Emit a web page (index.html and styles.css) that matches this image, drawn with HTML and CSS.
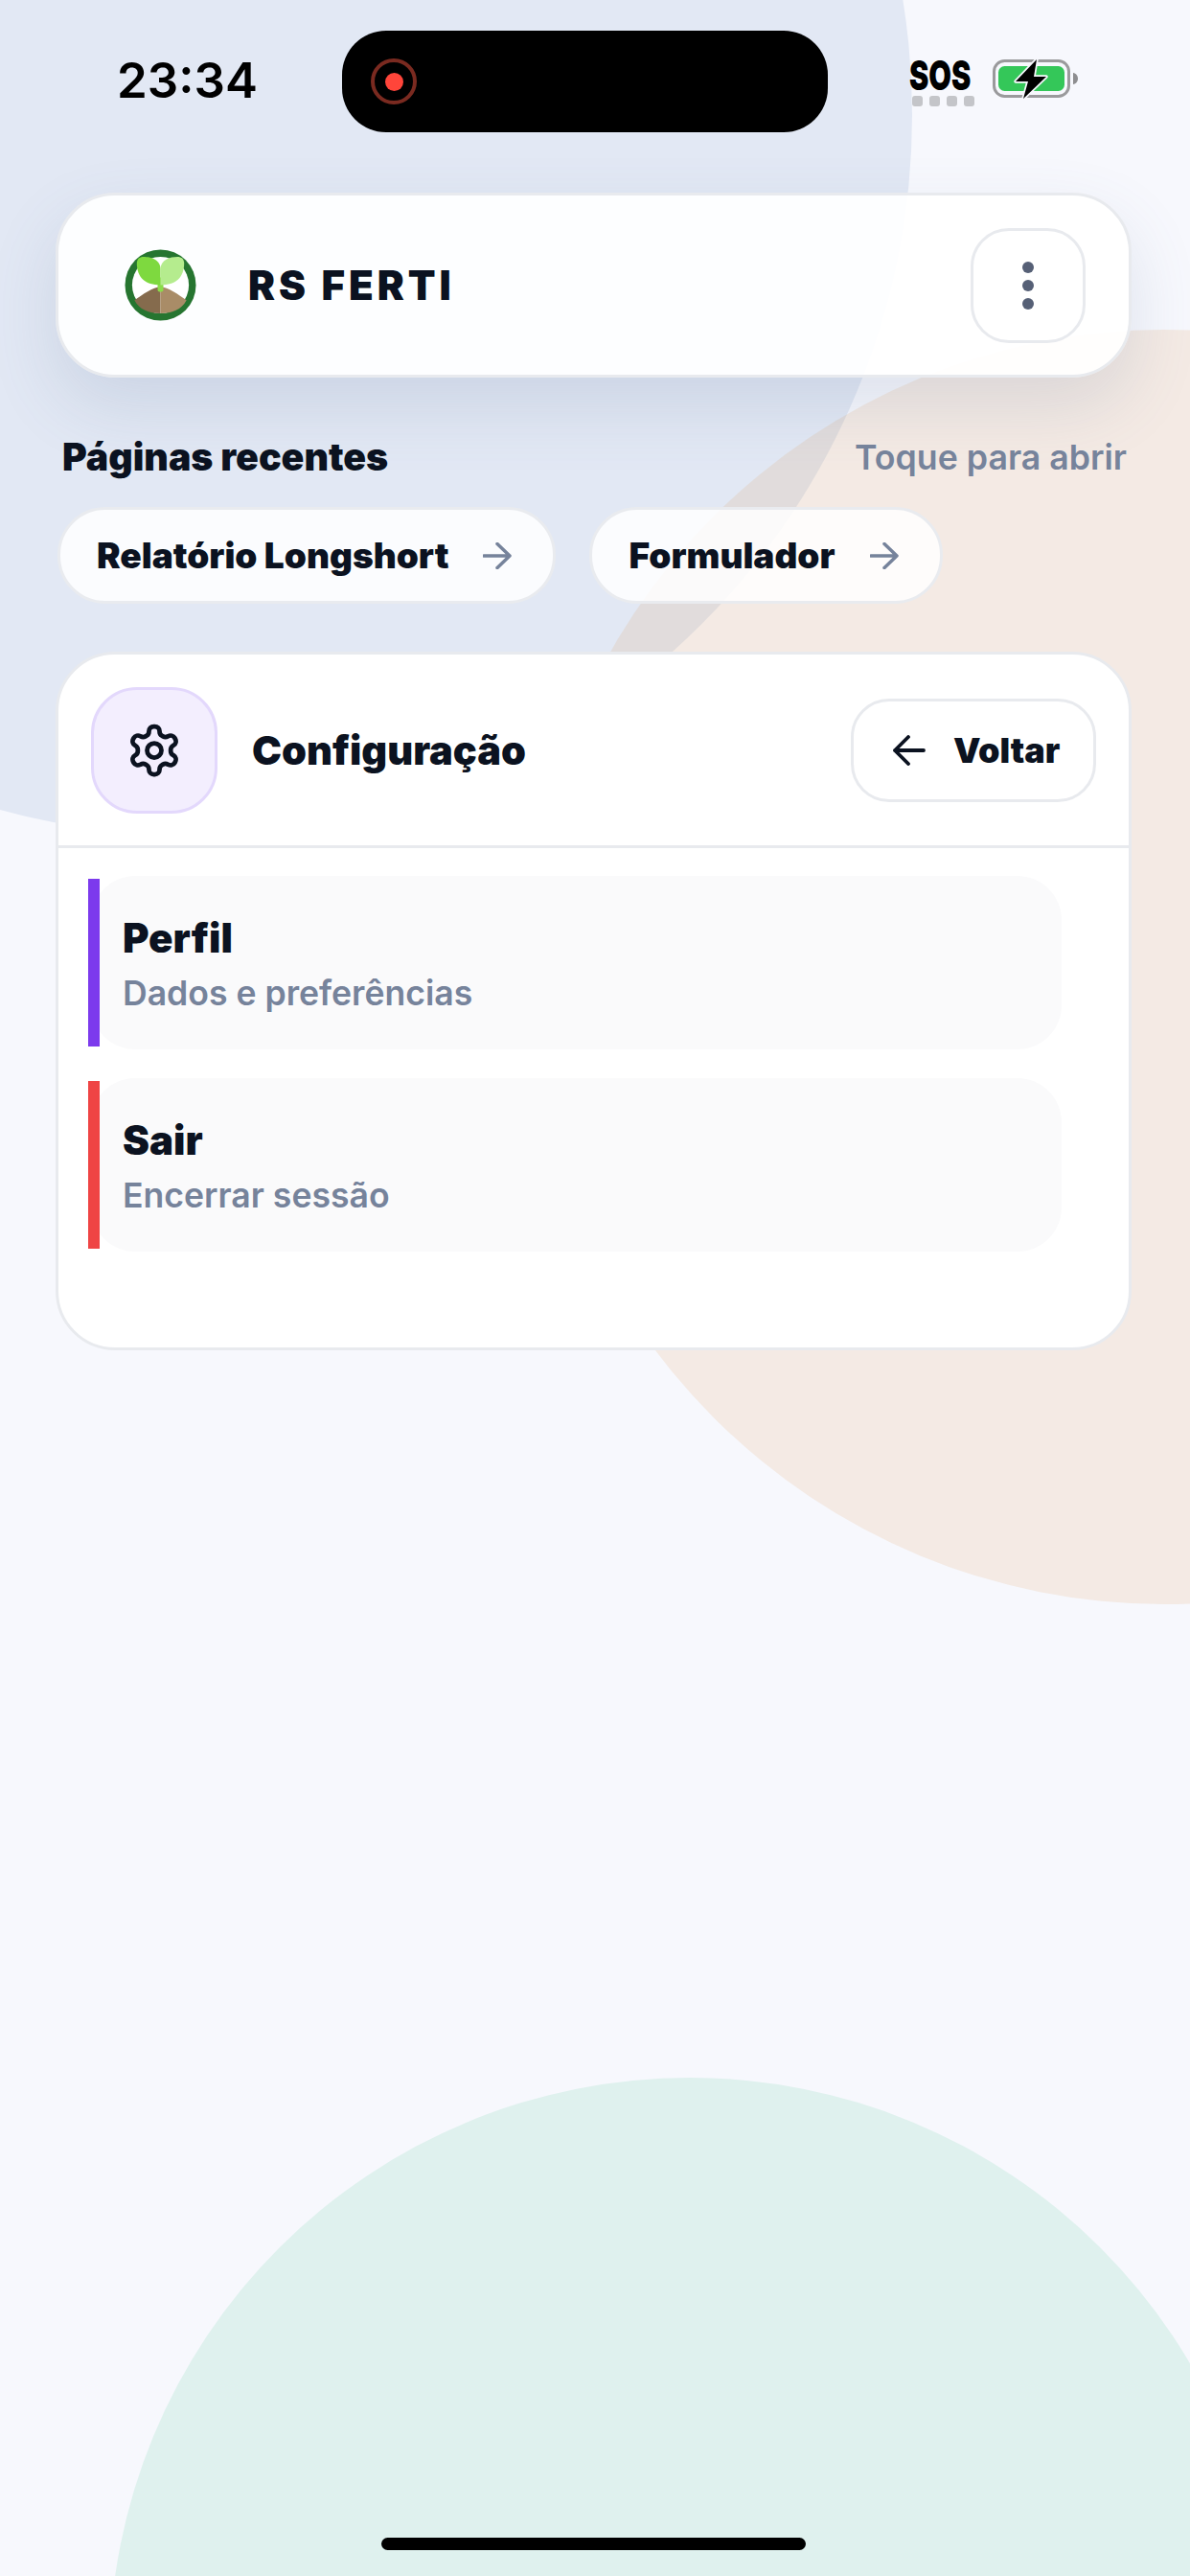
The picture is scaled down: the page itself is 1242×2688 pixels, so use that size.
FILE: index.html
```html
<!DOCTYPE html>
<html lang="pt-BR">
<head>
	<title>RS FERTI</title>
	<meta charset="utf-8">
	<link rel="stylesheet" href="styles.css">
</head>
<body>
	<div class="bg">
		<div class="blob blobBlue"></div>
		<div class="blob blobPeach"></div>
		<div class="blob blobTeal"></div>
	</div>

	<div class="page">
		<div class="statusBar">
			<div class="time">23:34</div>
			<div class="island">
				<div class="recRing"><div class="recDot"></div></div>
			</div>
			<div class="statusRight">
				<div class="sos">
					<div class="sosText">SOS</div>
					<div class="sosDots"><i></i><i></i><i></i><i></i></div>
				</div>
				<svg class="battery" width="90" height="46" viewBox="0 0 90 46">
					<rect x="1.500" y="3.500" width="78" height="37" rx="11" fill="none" stroke="#9a9a9c" stroke-width="3"/>
					<rect x="6" y="9" width="69" height="26" rx="6.500" fill="#34c759"/>
					<path d="M84 16c3 .5 5 3 5 6s-2 5.500-5 6z" fill="#8e8e90"/>
					<path d="M46 2 L24 25 H37 L32 43 L56 20 H43 Z" fill="#000" stroke="#f7f8fd" stroke-width="3.500" stroke-linejoin="round" paint-order="stroke"/>
				</svg>
			</div>
		</div>

		<div class="topCard">
			<div class="brand">
				<svg class="logo" width="75" height="75" viewBox="0 0 76 76">
					<circle cx="38" cy="38" r="37.500" fill="#267530"/>
					<circle cx="38" cy="38" r="30" fill="#fff"/>
					<path d="M38 40c-8 0-19 8-27.500 14 5 10 15.500 14 27.500 14z" fill="#856b4d"/>
					<path d="M38 40c8 0 19 8 27.500 14-5 10-15.500 14-27.500 14z" fill="#a98c67"/>
					<rect x="35" y="30" width="6" height="15" rx="2" fill="#8bdc4a"/>
					<path d="M38 38C22 38 13 30 13 15c0-5 3-7 7-7 8 0 18 3 18 13z" fill="#7ed93f"/>
					<path d="M38 38c16 0 25-8 25-23 0-5-3-7-7-7-8 0-18 3-18 13z" fill="#b5ec8e"/>
				</svg>
				<div class="brandName">RS FERTI</div>
			</div>
			<div class="menuButton"><i></i><i></i><i></i></div>
		</div>

		<div class="recentHead">
			<div class="recentTitle">Páginas recentes</div>
			<div class="recentHint">Toque para abrir</div>
		</div>

		<div class="chips">
			<div class="chip">
				<span>Relatório Longshort</span>
				<svg width="30" height="28" viewBox="0 0 30 28" fill="none" stroke="#76839b" stroke-width="3.500" stroke-linecap="round" stroke-linejoin="round"><path d="M1 14h27M15 1.500 28 14 15 26.500"/></svg>
			</div>
			<div class="chip">
				<span>Formulador</span>
				<svg width="30" height="28" viewBox="0 0 30 28" fill="none" stroke="#76839b" stroke-width="3.500" stroke-linecap="round" stroke-linejoin="round"><path d="M1 14h27M15 1.500 28 14 15 26.500"/></svg>
			</div>
		</div>

		<div class="mainCard">
			<div class="cardHead">
				<div class="iconBox">
					<svg width="60" height="60" viewBox="0 0 24 24" fill="none" stroke="#0b1220" stroke-width="1.900" stroke-linecap="round" stroke-linejoin="round">
						<path d="M12.220 2h-.44a2 2 0 0 0-2 2v.18a2 2 0 0 1-1 1.730l-.43.25a2 2 0 0 1-2 0l-.15-.08a2 2 0 0 0-2.730.73l-.22.38a2 2 0 0 0 .73 2.730l.15.1a2 2 0 0 1 1 1.720v.51a2 2 0 0 1-1 1.740l-.15.09a2 2 0 0 0-.73 2.730l.22.38a2 2 0 0 0 2.730.73l.15-.08a2 2 0 0 1 2 0l.43.25a2 2 0 0 1 1 1.730V20a2 2 0 0 0 2 2h.44a2 2 0 0 0 2-2v-.18a2 2 0 0 1 1-1.730l.43-.25a2 2 0 0 1 2 0l.15.08a2 2 0 0 0 2.730-.73l.22-.39a2 2 0 0 0-.73-2.730l-.15-.08a2 2 0 0 1-1-1.740v-.5a2 2 0 0 1 1-1.740l.15-.09a2 2 0 0 0 .73-2.730l-.22-.38a2 2 0 0 0-2.730-.73l-.15.08a2 2 0 0 1-2 0l-.43-.25a2 2 0 0 1-1-1.730V4a2 2 0 0 0-2-2z"/>
						<circle cx="12" cy="12" r="3"/>
					</svg>
				</div>
				<div class="cardTitle">Configuração</div>
				<div class="backButton">
					<svg width="34" height="32" viewBox="0 0 34 32" fill="none" stroke="#0b1220" stroke-width="3.800" stroke-linecap="round" stroke-linejoin="round"><path d="M32 16H2M16 2 2 16l14 14"/></svg>
					<span>Voltar</span>
				</div>
			</div>
			<div class="rows">
				<div class="row rowPurple">
					<div class="rowTitle">Perfil</div>
					<div class="rowSub">Dados e preferências</div>
				</div>
				<div class="row rowRed">
					<div class="rowTitle">Sair</div>
					<div class="rowSub">Encerrar sessão</div>
				</div>
			</div>
		</div>
	</div>

	<div class="homeBar"></div>
</body>
</html>
```
FILE: styles.css
```css
html, body {
	margin: 0;
	padding: 0;
}
body {
	position: relative;
	width: 1242px;
	height: 2688px;
	overflow: hidden;
	background-color: #f7f8fd;
	font-family: Inter, "Noto Sans", sans-serif;
	color: #0b1220;
}

/* background circles */
.bg {
	position: absolute;
	left: 0;
	top: 0;
	width: 1242px;
	height: 2688px;
	overflow: hidden;
}
.blob {
	position: absolute;
	border-radius: 50%;
}
.blobBlue {
	left: -552px;
	top: -632px;
	width: 1504px;
	height: 1504px;
	background-color: #e2e8f4;
}
.blobPeach {
	left: 550px;
	top: 344px;
	width: 1330px;
	height: 1330px;
	background-color: rgba(222, 140, 53, 0.12);
}
.blobTeal {
	left: 114px;
	top: 2168px;
	width: 1212px;
	height: 1212px;
	background-color: #dff1ee;
}

.page {
	position: relative;
	display: flex;
	flex-direction: column;
}

/* status bar */
.statusBar {
	display: flex;
	align-items: flex-start;
	height: 201px;
	padding-left: 122px;
}
.time {
	width: 235px;
	margin-top: 52px;
	font-size: 51px;
	font-weight: 600;
	line-height: 64px;
	color: #000;
}
.island {
	display: flex;
	align-items: center;
	width: 507px;
	height: 106px;
	margin-top: 32px;
	padding-left: 30px;
	box-sizing: border-box;
	background-color: #000;
	border-radius: 46px;
}
.recRing {
	display: flex;
	align-items: center;
	justify-content: center;
	width: 48px;
	height: 48px;
	box-sizing: border-box;
	border: 4px solid #7a2a20;
	border-radius: 50%;
}
.recDot {
	width: 19px;
	height: 19px;
	background-color: #ff453a;
	border-radius: 50%;
}
.statusRight {
	display: flex;
	align-items: flex-start;
	gap: 19px;
	margin-left: 85px;
	margin-top: 60px;
}
.sos {
	width: 68px;
}
.sosText {
	font-size: 43px;
	font-weight: 900;
	line-height: 36px;
	color: #000;
	transform: scaleX(0.71);
	transform-origin: left center;
}
.sosDots {
	display: flex;
	gap: 7px;
	margin-top: 4px;
	padding-left: 3px;
}
.sosDots i {
	display: block;
	width: 11px;
	height: 11px;
	background-color: #c4c5c9;
	border-radius: 3px;
}

/* top card */
.topCard {
	display: flex;
	align-items: center;
	justify-content: space-between;
	width: 1123px;
	height: 193px;
	box-sizing: border-box;
	margin-left: 58px;
	padding: 0 45px 0 69px;
	background-color: rgba(255, 255, 255, 0.93);
	border: 3px solid #e8eaee;
	border-radius: 62px;
	box-shadow: 0 30px 70px rgba(90, 110, 150, 0.16);
}
.brand {
	display: flex;
	align-items: center;
	gap: 54px;
}
.logo {
	display: block;
}
.brandName {
	font-size: 42px;
	font-weight: 900;
	letter-spacing: 4px;
}
.menuButton {
	display: flex;
	flex-direction: column;
	align-items: center;
	justify-content: center;
	gap: 7px;
	width: 120px;
	height: 120px;
	box-sizing: border-box;
	background-color: #fff;
	border: 3px solid #e8eaee;
	border-radius: 40px;
}
.menuButton i {
	display: block;
	width: 12px;
	height: 12px;
	background-color: #566076;
	border-radius: 50%;
}

/* recent pages */
.recentHead {
	display: flex;
	align-items: center;
	justify-content: space-between;
	width: 1111px;
	margin: 58px 0 0 65px;
	line-height: 50px;
}
.recentTitle {
	font-size: 39.300px;
	font-weight: 900;
}
.recentHint {
	font-size: 35.700px;
	font-weight: 600;
	color: #76839b;
}
.chips {
	display: flex;
	gap: 35px;
	margin: 27px 0 0 60px;
}
.chip {
	display: flex;
	align-items: center;
	gap: 36px;
	height: 101px;
	box-sizing: border-box;
	padding: 0 43px 0 38px;
	background-color: rgba(255, 255, 255, 0.85);
	border: 3px solid #e9ebef;
	border-radius: 50px;
	font-size: 37px;
	font-weight: 900;
}

/* config card */
.mainCard {
	width: 1123px;
	height: 729px;
	box-sizing: border-box;
	margin: 50px 0 0 58px;
	background-color: #fff;
	border: 3px solid #e8eaee;
	border-radius: 62px;
}
.cardHead {
	display: flex;
	align-items: center;
	height: 202px;
	box-sizing: border-box;
	padding: 0 34px;
	border-bottom: 3px solid #e8eaee;
}
.iconBox {
	display: flex;
	align-items: center;
	justify-content: center;
	width: 132px;
	height: 132px;
	box-sizing: border-box;
	background-color: #f3eefe;
	border: 3px solid #e3d8fc;
	border-radius: 48px;
}
.cardTitle {
	flex: 1;
	margin-left: 36px;
	font-size: 41.500px;
	font-weight: 900;
}
.backButton {
	display: flex;
	align-items: center;
	gap: 29px;
	width: 256px;
	height: 108px;
	box-sizing: border-box;
	padding-left: 41px;
	border: 3px solid #e8eaee;
	border-radius: 40px;
	font-size: 36px;
	font-weight: 900;
}
.rows {
	display: flex;
	flex-direction: column;
	gap: 30px;
	padding: 29px 0 0 34px;
}
.row {
	position: relative;
	display: flex;
	flex-direction: column;
	justify-content: center;
	gap: 14px;
	width: 1013px;
	height: 181px;
	box-sizing: border-box;
	padding: 4px 0 0 33px;
	background-color: #fafafb;
	border-radius: 46px;
}
.row::before {
	content: "";
	position: absolute;
	left: -3px;
	top: 3px;
	bottom: 3px;
	width: 12px;
}
.rowPurple::before {
	background-color: #7c3aed;
}
.rowRed::before {
	background-color: #ef4444;
}
.rowTitle {
	font-size: 42px;
	font-weight: 900;
	line-height: 46px;
}
.rowSub {
	font-size: 35.600px;
	font-weight: 600;
	line-height: 42px;
	color: #76839b;
}

.homeBar {
	position: absolute;
	left: 398px;
	top: 2648px;
	width: 443px;
	height: 13px;
	background-color: #000;
	border-radius: 7px;
}
```
